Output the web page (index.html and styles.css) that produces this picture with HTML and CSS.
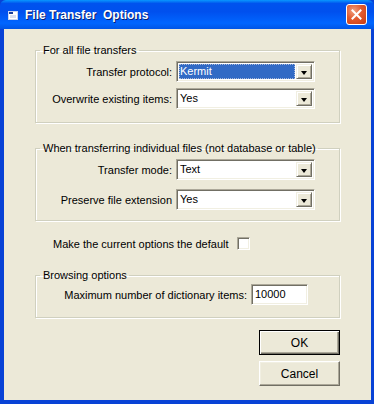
FILE: index.html
```html
<!DOCTYPE html>
<html lang="en">
<head>
    <meta charset="UTF-8">
    <title>File Transfer Options</title>
    <link rel="stylesheet" href="styles.css">
</head>
<body>
    <div class="window">
        <div class="titlebar">
            <svg class="app-icon" width="10" height="9" viewBox="0 0 10 9">
                <rect x="0.5" y="0.5" width="9" height="8" fill="#ffffff" stroke="#c8d4f0"/>
                <rect x="1" y="1" width="4" height="2" fill="#1a3e9a"/>
                <rect x="2" y="4" width="6" height="3" fill="#d8dff0"/>
            </svg>
            <span class="title">File Transfer&nbsp; Options</span>
            <div class="close-btn">
                <svg width="11" height="11" viewBox="0 0 11 11">
                    <path d="M1.5 1.5 L9.5 9.5 M9.5 1.5 L1.5 9.5" stroke="#ffffff" stroke-width="2" stroke-linecap="square"/>
                </svg>
            </div>
        </div>

        <div class="client">
            <fieldset class="group group-one">
                <legend>For all file transfers</legend>
                <div class="row">
                    <label>Transfer protocol:</label>
                    <div class="combo">
                        <span class="value selected">Kermit</span>
                        <span class="drop"></span>
                    </div>
                </div>
                <div class="row">
                    <label>Overwrite existing items:</label>
                    <div class="combo">
                        <span class="value">Yes</span>
                        <span class="drop"></span>
                    </div>
                </div>
            </fieldset>

            <fieldset class="group group-two">
                <legend>When transferring individual files (not database or table)</legend>
                <div class="row">
                    <label>Transfer mode:</label>
                    <div class="combo">
                        <span class="value">Text</span>
                        <span class="drop"></span>
                    </div>
                </div>
                <div class="row">
                    <label>Preserve file extension</label>
                    <div class="combo">
                        <span class="value">Yes</span>
                        <span class="drop"></span>
                    </div>
                </div>
            </fieldset>

            <div class="check-row">
                <span>Make the current options the default</span>
                <span class="checkbox"></span>
            </div>

            <fieldset class="group group-three">
                <legend>Browsing options</legend>
                <div class="row">
                    <label>Maximum number of dictionary items:</label>
                    <div class="textbox">10000</div>
                </div>
            </fieldset>

            <div class="buttons">
                <button type="button" class="btn default">OK</button>
                <button type="button" class="btn">Cancel</button>
            </div>
        </div>
    </div>
</body>
</html>
```

FILE: styles.css
```css
body {
    margin: 0;
    font-family: "Liberation Sans", Arial, sans-serif;
    font-size: 11px;
    color: #000;
    background: #ece9d8;
}

.window {
    width: 374px;
    height: 404px;
    box-sizing: border-box;
    background: #0842d6;
    padding: 0 3px 4px 4px;
    display: flex;
    flex-direction: column;
}

/* title bar */
.titlebar {
    height: 29px;
    flex-shrink: 0;
    margin: 0 -3px 0 -4px;
    display: flex;
    align-items: center;
    padding-left: 8px;
    background: linear-gradient(to bottom, #0997ff 0%, #0053ee 12%, #0050ee 40%, #0066ff 80%, #0055e5 100%);
    border-radius: 6px 6px 0 0;
}

.app-icon {
    margin-top: 1px;
}

.title {
    margin-left: 7px;
    color: #fff;
    font-weight: bold;
    font-size: 12px;
    text-shadow: 1px 1px #0a1e6e;
    flex: 1;
}

.close-btn {
    width: 19px;
    height: 19px;
    margin-right: 7px;
    border: 1px solid #fff;
    border-radius: 3px;
    background: radial-gradient(circle at 35% 30%, #f0a080 0%, #e25a2f 45%, #c63c12 100%);
    display: flex;
    align-items: center;
    justify-content: center;
}

/* client area */
.client {
    flex: 1;
    background: #ece9d8;
    padding: 14px 0 0 31px;
}

.group {
    margin: 0;
    width: 305px;
    min-width: 0;
    box-sizing: border-box;
    border: 1px solid #d0d0bf;
    box-shadow: inset 1px 1px #fff, 1px 1px #fff;
    padding: 4px 24px 0 0;
}

.group legend {
    margin-left: 4px;
    padding: 0 2px 0 3px;
    line-height: 14px;
    white-space: nowrap;
}

.group-one {
    padding-bottom: 13px;
}

.group-two {
    margin-top: 18px;
    padding-bottom: 10px;
}

.group-three {
    margin-top: 18px;
    padding-top: 2px;
    padding-right: 31px;
    padding-bottom: 12px;
}

.row {
    display: flex;
    justify-content: flex-end;
    align-items: center;
    gap: 4px;
}

.row + .row {
    margin-top: 6px;
}

.group-two .row + .row {
    margin-top: 9px;
}

.combo {
    width: 139px;
    height: 21px;
    box-sizing: border-box;
    display: flex;
    align-items: stretch;
    background: #fff;
    border: 1px solid;
    border-color: #aca899 #fff #fff #aca899;
    box-shadow: inset 1px 1px #716f64, inset -1px -1px #f1efe2;
    padding: 2px;
}

.value {
    flex: 1;
    padding-left: 1px;
    line-height: 15px;
}

.value.selected {
    background: #316ac5;
    color: #fff;
    outline: 1px dotted #a8b8d8;
    outline-offset: -1px;
    margin-right: 1px;
}

.drop {
    width: 16px;
    box-sizing: border-box;
    background: #ece9d8;
    border: 1px solid;
    border-color: #f1efe2 #716f64 #716f64 #f1efe2;
    box-shadow: inset 1px 1px #fff, inset -1px -1px #aca899;
    position: relative;
}

.drop::after {
    content: "";
    position: absolute;
    left: 4px;
    top: 6px;
    border-left: 3.5px solid transparent;
    border-right: 3.5px solid transparent;
    border-top: 4px solid #000;
}

.check-row {
    display: flex;
    align-items: center;
    gap: 8px;
    margin: 16px 0 0 18px;
}

.checkbox {
    width: 13px;
    height: 13px;
    box-sizing: border-box;
    background: #fff;
    border: 1px solid;
    border-color: #aca899 #fff #fff #aca899;
    box-shadow: inset 1px 1px #716f64, inset -1px -1px #f1efe2;
}

.textbox {
    width: 57px;
    height: 21px;
    box-sizing: border-box;
    background: #fff;
    border: 1px solid;
    border-color: #aca899 #fff #fff #aca899;
    box-shadow: inset 1px 1px #716f64, inset -1px -1px #f1efe2;
    padding: 2px 3px;
    line-height: 15px;
}

.buttons {
    display: flex;
    flex-direction: column;
    align-items: flex-start;
    gap: 6px;
    margin: 12px 0 0 224px;
}

.btn {
    width: 81px;
    height: 25px;
    box-sizing: border-box;
    font-family: "Liberation Sans", Arial, sans-serif;
    font-size: 12px;
    color: #000;
    background: #ece9d8;
    border: 1px solid;
    border-color: #fff #716f64 #716f64 #fff;
    box-shadow: inset -1px -1px #aca899, inset 1px 1px #f1efe2;
    padding: 0;
}

.btn.default {
    border: 1px solid #000;
    box-shadow: inset 1px 1px #fff, inset -1px -1px #716f64, inset -2px -2px #aca899;
}
```
